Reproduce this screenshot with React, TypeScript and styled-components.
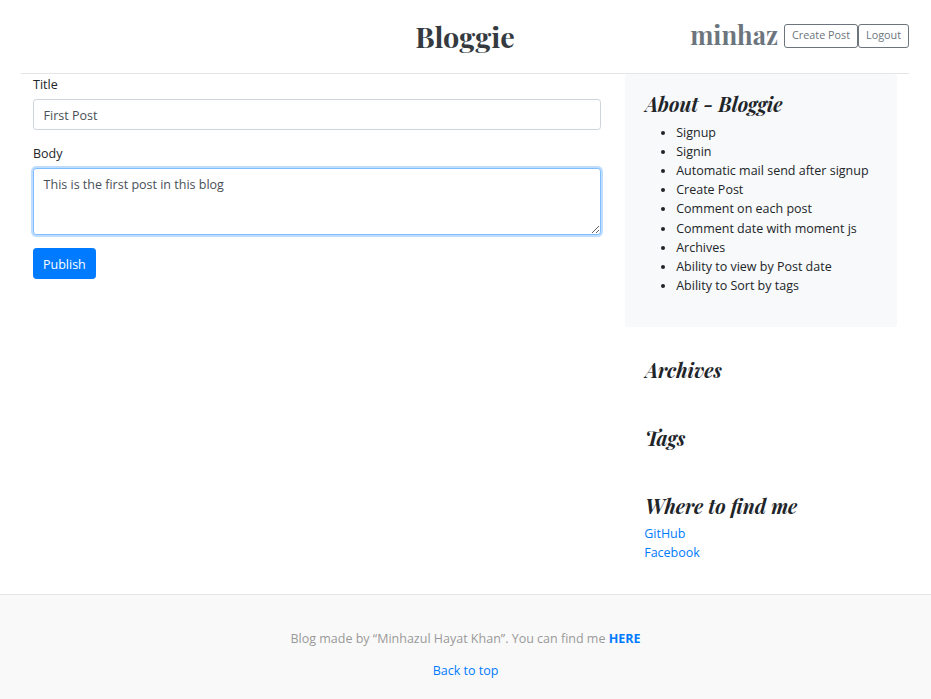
import styled, { createGlobalStyle } from "styled-components";

const GlobalStyle = createGlobalStyle`
  body {
    margin: 0;
    font-family: "Open Sans", "Noto Sans", "Liberation Sans", sans-serif;
    font-size: 12.5px;
    line-height: 19.2px;
    color: #212529;
    background: #fff;
  }
  * { box-sizing: border-box; }
`;

const Container = styled.div`
  width: 888px;
  margin-left: 21px;
`;

const Header = styled.header`
  height: 74px;
  display: grid;
  grid-template-columns: 1fr 1fr 1fr;
  align-items: center;
  border-bottom: 1px solid #e5e5e5;
  line-height: 1;
`;

const Logo = styled.a`
  justify-self: center;
  font-family: "Playfair Display", "Liberation Serif", Georgia, serif;
  font-weight: 700;
  font-size: 28.8px;
  color: #343a40;
  text-decoration: none;
`;

const UserBox = styled.div`
  display: flex;
  justify-content: flex-end;
  align-items: center;
`;

const UserName = styled.span`
  font-family: "Playfair Display", "Liberation Serif", Georgia, serif;
  font-weight: 700;
  font-size: 25.6px;
  color: #6c757d;
  margin-right: 6px;
  margin-bottom: 4px;
`;

const OutlineButton = styled.button`
  font-family: inherit;
  font-size: 10.8px;
  line-height: 1.5;
  height: 24px;
  padding: 2px 7px;
  color: #6c757d;
  background: transparent;
  border: 1px solid #6c757d;
  border-radius: 3px;
  margin-top: -2px;
`;

const Row = styled.div`
  display: grid;
  grid-template-columns: 592px 296px;
`;

const Main = styled.div`
  padding: 0 12px;
`;

const FormGroup = styled.div`
  margin-bottom: 12.8px;
`;

const Label = styled.label`
  display: block;
  padding-top: 1px;
  margin-bottom: 5px;
`;

const Input = styled.input`
  display: block;
  width: 100%;
  height: 31px;
  padding: 5.8px 9.6px 3.8px;
  font-family: inherit;
  font-size: 12.5px;
  color: #495057;
  border: 1px solid #ced4da;
  border-radius: 3.2px;
  outline: none;
`;

const TextArea = styled.textarea<{ $focused?: boolean }>`
  display: block;
  width: 100%;
  height: 67px;
  padding: 5.8px 9.6px 3.8px;
  font-family: inherit;
  font-size: 12.5px;
  line-height: 19.2px;
  color: #495057;
  border: 1px solid ${(p) => (p.$focused ? "#80bdff" : "#ced4da")};
  border-radius: 3.2px;
  box-shadow: ${(p) => (p.$focused ? "0 0 0 2px rgba(0,123,255,.25)" : "none")};
  outline: none;
  resize: vertical;
`;

const PrimaryButton = styled.button`
  font-family: inherit;
  font-size: 12.5px;
  line-height: 1.5;
  height: 31px;
  padding: 6.5px 9px 3px;
  color: #fff;
  background: #007bff;
  border: 1px solid #007bff;
  border-radius: 3.2px;
`;

const Sidebar = styled.aside`
  padding: 0 12px;
`;

const Panel = styled.div<{ $light?: boolean }>`
  padding: 19.2px;
  margin-bottom: ${(p) => (p.$light ? "12.8px" : "0")};
  background: ${(p) => (p.$light ? "#f8f9fa" : "transparent")};
  border-radius: ${(p) => (p.$light ? "3.2px" : "0")};
  min-height: ${(p) => (p.$light ? "253px" : "auto")};
`;

const PanelTitle = styled.h4`
  margin: 0 0 6.4px;
  padding-left: 1px;
  font-family: "Playfair Display", "Liberation Serif", Georgia, serif;
  font-style: italic;
  font-weight: 700;
  font-size: 19.8px;
  line-height: 23px;
  color: #212529;
`;

const FeatureList = styled.ul`
  margin: 0;
  padding-left: 32px;
  margin-top: 6px;
`;

const PlainList = styled.ol`
  list-style: none;
  margin: 0;
  padding: 0;
`;

const Link = styled.a`
  color: #007bff;
  text-decoration: none;
`;

const Footer = styled.footer`
  margin-top: 12px;
  padding: 34px 0 22px;
  text-align: center;
  background: #f9f9f9;
  color: #999;
  border-top: 1px solid #e5e5e5;
  p {
    margin: 0 0 12.8px;
  }
`;

const Strong = styled.a`
  color: #007bff;
  font-weight: 700;
  text-decoration: none;
`;

const features = [
  "Signup",
  "Signin",
  "Automatic mail send after signup",
  "Create Post",
  "Comment on each post",
  "Comment date with moment js",
  "Archives",
  "Ability to view by Post date",
  "Ability to Sort by tags",
];

export default function App() {
  return (
    <>
      <GlobalStyle />
      <Container>
        <Header>
          <div />
          <Logo href="#">Bloggie</Logo>
          <UserBox>
            <UserName>minhaz</UserName>
            <OutlineButton>Create Post</OutlineButton>
            <OutlineButton>Logout</OutlineButton>
          </UserBox>
        </Header>
        <Row>
          <Main>
            <FormGroup>
              <Label>Title</Label>
              <Input defaultValue="First Post" />
            </FormGroup>
            <FormGroup>
              <Label>Body</Label>
              <TextArea $focused defaultValue="This is the first post in this blog" />
            </FormGroup>
            <PrimaryButton>Publish</PrimaryButton>
          </Main>
          <Sidebar>
            <Panel $light>
              <PanelTitle>About - Bloggie</PanelTitle>
              <FeatureList>
                {features.map((f) => (
                  <li key={f}>{f}</li>
                ))}
              </FeatureList>
            </Panel>
            <Panel>
              <PanelTitle>Archives</PanelTitle>
              <PlainList />
            </Panel>
            <Panel>
              <PanelTitle>Tags</PanelTitle>
              <PlainList />
            </Panel>
            <Panel>
              <PanelTitle>Where to find me</PanelTitle>
              <PlainList>
                <li>
                  <Link href="#">GitHub</Link>
                </li>
                <li>
                  <Link href="#">Facebook</Link>
                </li>
              </PlainList>
            </Panel>
          </Sidebar>
        </Row>
      </Container>
      <Footer>
        <p>
          Blog made by “Minhazul Hayat Khan”. You can find me <Strong href="#">HERE</Strong>
        </p>
        <p>
          <Link href="#">Back to top</Link>
        </p>
      </Footer>
    </>
  );
}
